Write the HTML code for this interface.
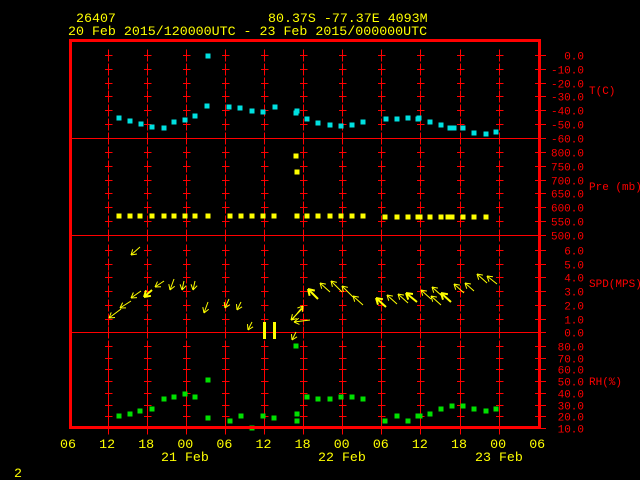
<!DOCTYPE html>
<html><head><meta charset="utf-8">
<style>
html,body{margin:0;padding:0;background:#000;width:640px;height:480px;overflow:hidden}
svg{display:block}
text{font-family:"Liberation Mono",monospace}
</style></head><body>
<svg id="s" width="640" height="480" xmlns="http://www.w3.org/2000/svg">
<g font-size="13.3" fill="#ffff00">
<text x="76" y="22">26407</text>
<text x="268" y="22">80.37S  -77.37E  4093M</text>
<text x="68" y="35">20 Feb 2015/120000UTC - 23 Feb 2015/000000UTC</text>
<text x="14" y="477">2</text>
<text x="161" y="461">21 Feb</text>
<text x="318" y="461">22 Feb</text>
<text x="475" y="461">23 Feb</text>
</g>
<g id="g"></g>
<rect x="70.5" y="40.5" width="469" height="387" fill="none" stroke="#ff0000" stroke-width="3"/>
<g font-size="11" fill="#ff0000">
<text x="589" y="94">T(C)</text>
<text x="589" y="190">Pre (mb)</text>
<text x="589" y="287">SPD(MPS)</text>
<text x="589" y="385">RH(%)</text>
</g>
</svg>
<script>
var g=document.getElementById('g'),h='';
function L(x1,y1,x2,y2,c,w){h+='<line x1="'+x1+'" y1="'+y1+'" x2="'+x2+'" y2="'+y2+'" stroke="'+c+'" stroke-width="'+(w||1)+'"/>';}
function T(x,y,t,c,s,a){h+='<text x="'+x+'" y="'+y+'" fill="'+c+'" font-size="'+s+'"'+(a?' text-anchor="'+a+'"':'')+'>'+t+'</text>';}
function R(x,y,c){h+='<rect x="'+(x-2.5)+'" y="'+(y-2.5)+'" width="5" height="5" fill="'+c+'"/>';}
[138.5,235.5,332.5].forEach(function(y){L(72,y,538,y,'#ff0000');});
var cols=[108.5,147.5,186.5,225.5,264.5,303.5,342.5,381.5,420.5,460.5,499.5];
var ticks=[],labs=[];
for(var i=0;i<7;i++){ticks.push(55+13.83*i);labs.push(i==0?'0.0':'-'+(i*10)+'.0');}
for(var i=0;i<7;i++){ticks.push(152+13.83*i);labs.push((800-50*i)+'.0');}
for(var i=0;i<6;i++){ticks.push(250+13.7*i);labs.push((6-i)+'.0');}
ticks.push(332);labs.push('0.0');
for(var i=0;i<8;i++){ticks.push(346+11.7*i);labs.push((80-10*i)+'.0');}
ticks.forEach(function(y,k){y=Math.round(y)+0.5;
 cols.forEach(function(x){L(x,y-6,x,y+6,'#ff0000');L(x-3.5,y,x+4,y,'#ff0000');});
 L(535,y,546,y,'#ff0000');T(584,y+4,labs[k],'#ff0000',11,'end');});
var xl=['06','12','18','00','06','12','18','00','06','12','18','00','06'];
xl.forEach(function(t,i){T(68+39.1*i,448,t,'#ffff00',13.3,'middle');});
var cy='#00e0e0';
[[119,118],[130,121],[141,124],[152,127],[164,128],[174,122],[185,120],[195,116],[207,106],[208,56],[229,107],[240,108],[252,111],[263,112],[275,107],[296,113],[297,111],[307,119],[318,123],[330,125],[341,126],[352,125],[363,122],[386,119],[397,119],[408,118],[418,119],[419,118],[430,122],[441,125],[450,128],[454,128],[463,128],[474,133],[486,134],[496,132]].forEach(function(p){R(p[0],p[1],cy);});
var ye='#ffff00';
[119,130,140,152,164,174,185,195,208,230,241,252,263,274,297,307,318,330,341,352,363].forEach(function(x){R(x,216,ye);});
[385,397,408,418,420,430,441,448,452,463,474,486].forEach(function(x){R(x,217,ye);});
R(296,156,ye);R(297,172,ye);
var gr='#00e000';
[[119,416],[130,414],[140,411],[152,409],[164,399],[174,397],[185,394],[195,397],[208,380],[208,418],[230,421],[241,416],[252,428],[263,416],[274,418],[296,346],[297,414],[297,421],[307,397],[318,399],[330,399],[341,397],[352,397],[363,399],[385,421],[397,416],[408,421],[418,416],[420,416],[430,414],[441,409],[452,406],[463,406],[474,409],[486,411],[496,409]].forEach(function(p){R(p[0],p[1],gr);});
function A(tx,ty,sx,sy,w){w=w||1;L(sx,sy,tx,ty,ye,w);var dx=sx-tx,dy=sy-ty,l=Math.sqrt(dx*dx+dy*dy),ux=dx/l,uy=dy/l,hl=5+w;
 var c=Math.cos(0.55),s=Math.sin(0.55);
 L(tx,ty,tx+hl*(ux*c-uy*s),ty+hl*(ux*s+uy*c),ye,w);L(tx,ty,tx+hl*(ux*c+uy*s),ty+hl*(-ux*s+uy*c),ye,w);}
[[131,255,140,247],[109,318,121,309],[120,308,131,301],[131,298,141,291],[144,297,152,290,2],[155,287,164,281],[170,290,174,279],[182,290,184,281],[193,290,195,281],[204,313,208,302],[225,308,229,299],[237,310,241,302],[248,330,252,322],[291,320,303,308],[294,322,310,320],[292,340,296,332],[303,306,292,320],
[308,289,318,299,2],[320,283,330,292],[331,281,342,292],[342,286,353,297],[353,296,363,305],[376,298,386,307,2],[387,295,397,304],[398,294,408,303],[406,293,417,302,2],[421,290,431,299],[432,287,442,296],[431,296,441,305],[441,293,451,302,2],[454,284,464,293],[465,283,474,291],[477,274,487,283],[487,276,497,284]].forEach(function(a){A(a[0],a[1],a[2],a[3],a[4]);});
L(264.5,322,264.5,339,ye,3);L(274.5,322,274.5,339,ye,3);
g.innerHTML=h;
</script>
</body></html>
